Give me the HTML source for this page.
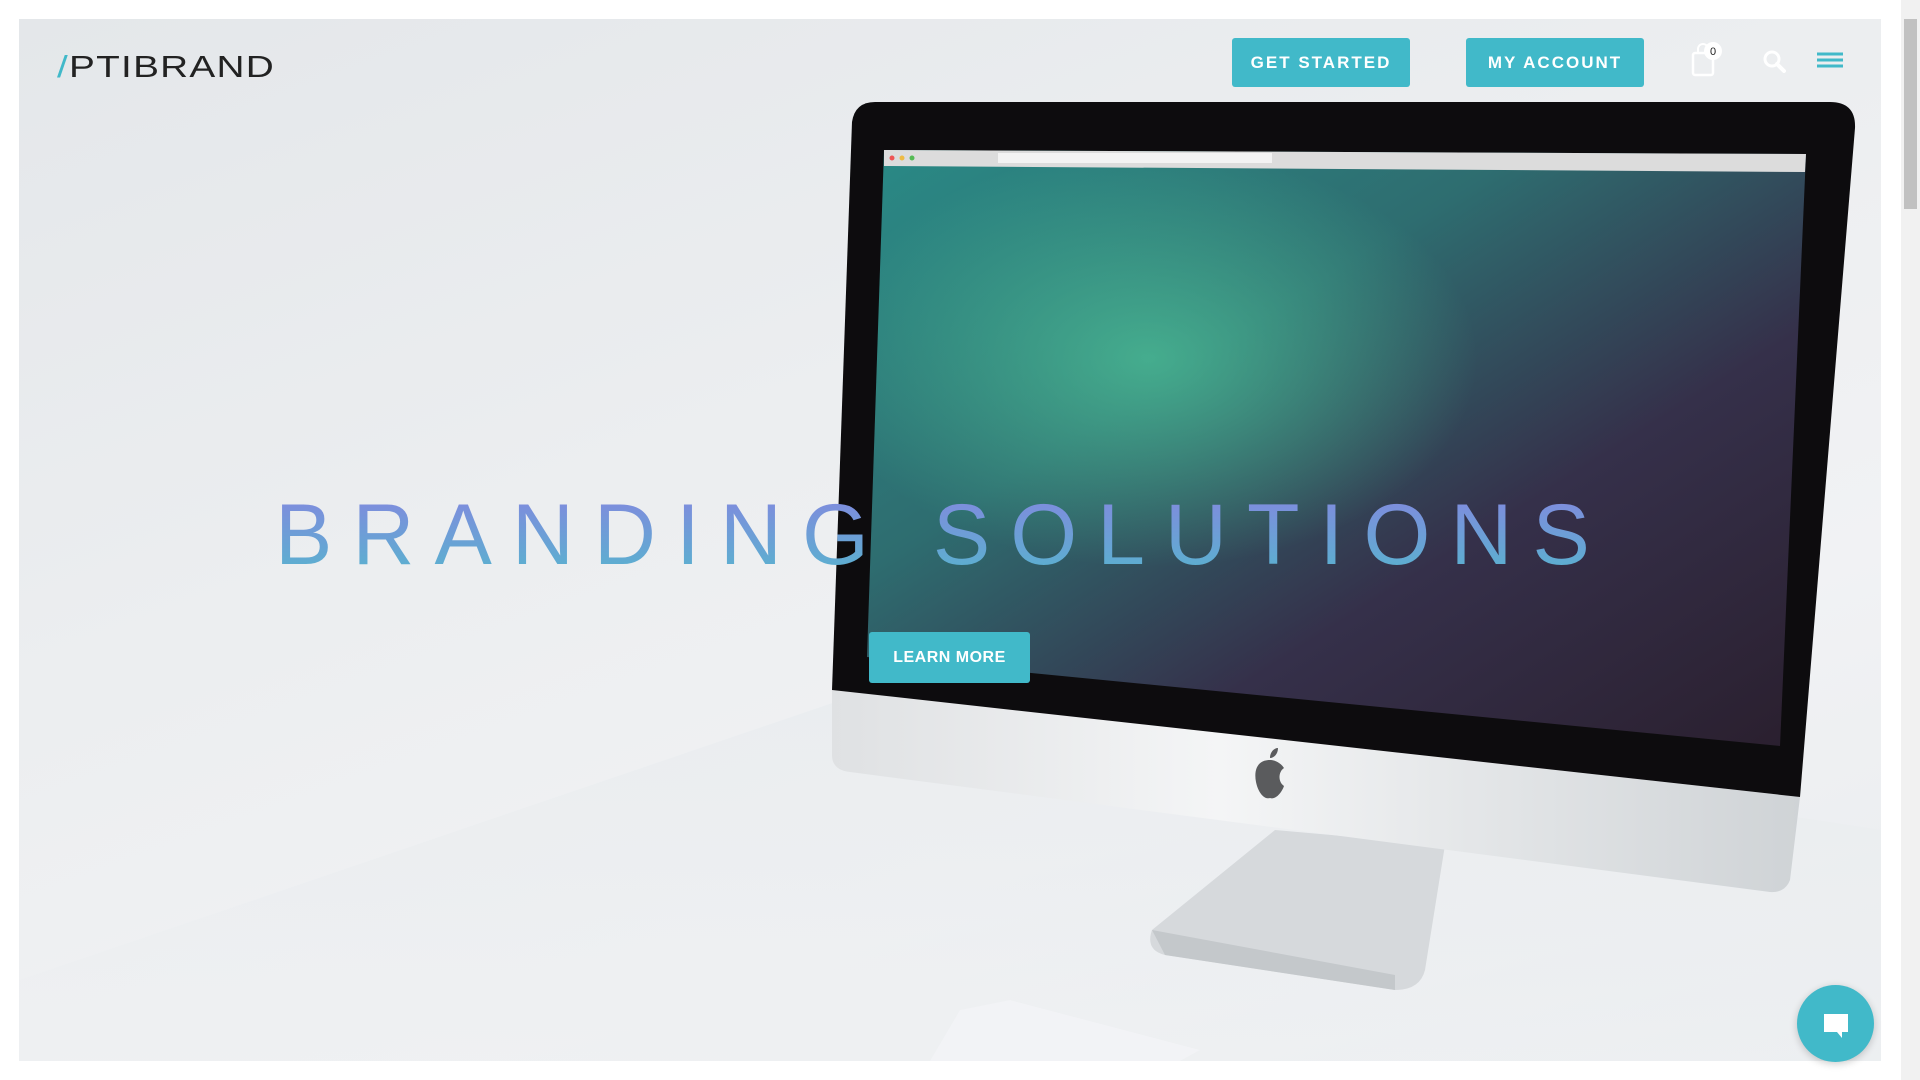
<!DOCTYPE html>
<html><head><meta charset="utf-8"><style>
html,body{margin:0;padding:0;width:1920px;height:1080px;overflow:hidden;background:#fff;font-family:"Liberation Sans",sans-serif}
#hero{position:absolute;left:19px;top:19px;width:1862px;height:1042px;overflow:hidden;
background:linear-gradient(160deg,#e4e7ea 0%,#eceef0 40%,#f1f2f4 70%,#e9ecef 100%)}
.btn{position:absolute;background:#41b9c9;color:#fff;font-weight:bold;letter-spacing:2px;font-size:17px;text-align:center;border-radius:3px}
#sb{position:absolute;right:0;top:0;width:19px;height:1080px;background:#f1f1f1}
#sb div{position:absolute;left:3px;top:19px;width:13px;height:190px;background:#c1c1c1}
h1{position:absolute;left:256px;top:456px;margin:0;font-size:86px;font-weight:normal;letter-spacing:20px;white-space:nowrap;
background:linear-gradient(#8b80e2,#4fbccb);-webkit-background-clip:text;background-clip:text;color:transparent;line-height:120px}
</style></head><body>
<div id="hero">
<svg width="1862" height="1042" viewBox="19 19 1862 1042" style="position:absolute;left:0;top:0">
<defs>
<linearGradient id="scr" x1="0" y1="0" x2="1" y2="1"><stop offset="0" stop-color="#2a8a86"/><stop offset="0.35" stop-color="#2e6d70"/><stop offset="0.65" stop-color="#35304a"/><stop offset="1" stop-color="#2a1f2e"/></linearGradient>
<radialGradient id="neb" cx="0.3" cy="0.35" r="0.35"><stop offset="0" stop-color="#4fc79a" stop-opacity="0.7"/><stop offset="1" stop-color="#4fc79a" stop-opacity="0"/></radialGradient>
<linearGradient id="chin" x1="0" y1="0" x2="1" y2="0"><stop offset="0" stop-color="#dfe1e3"/><stop offset="0.4" stop-color="#f4f5f6"/><stop offset="1" stop-color="#cfd3d6"/></linearGradient>
<linearGradient id="tbl" x1="0" y1="0" x2="0" y2="1"><stop offset="0" stop-color="#e8ebee"/><stop offset="1" stop-color="#eef0f2"/></linearGradient>
</defs>
<polygon points="19,980 900,680 1881,830 1881,1061 19,1061" fill="url(#tbl)" opacity="0.7"/>
<path d="M1275,830 L1445,845 L1425,970 Q1420,990 1395,990 L1165,955 Q1145,950 1152,930 Z" fill="#d6d9dc"/>
<path d="M1152,930 L1395,975 L1395,990 L1165,955 Z" fill="#c4c8cb"/>
<path d="M832,690 L1800,797 L1790,880 Q1785,893 1770,892 L850,772 Q832,770 832,755 Z" fill="url(#chin)"/>
<path d="M875,102 L1830,102 Q1856,102 1855,128 L1800,797 L832,690 L852,122 Q855,102 875,102 Z" fill="#0d0c0e"/>
<polygon points="884,150 1806,154 1780,746 867,657" fill="url(#scr)"/>
<polygon points="884,150 1806,154 1780,746 867,657" fill="url(#neb)"/>
<polygon points="884,150 1806,154 1805,172 884,166" fill="#dcdcdc"/>
<rect x="998" y="153" width="274" height="10" fill="#f3f3f3"/>
<circle cx="892" cy="158" r="2.5" fill="#e55"/><circle cx="902" cy="158" r="2.5" fill="#eb4"/><circle cx="912" cy="158" r="2.5" fill="#5b5"/>
<path d="M1270,760 c-14,0 -16,12 -14,22 c2,10 8,18 14,16 c6,2 12,-6 14,-12 c-6,-4 -6,-14 0,-18 c-4,-6 -10,-8 -14,-8 z M1270,758 c0,-6 4,-10 8,-10 c0,6 -4,10 -8,10z" fill="#5a5b5d"/>
<polygon points="960,1010 1010,1000 1200,1050 1180,1061 930,1061" fill="#f3f4f6" opacity="0.8"/>
</svg>
<h1>BRANDING SOLUTIONS</h1>
<div class="btn" style="left:850px;top:613px;width:161px;height:51px;line-height:51px;font-size:16px;letter-spacing:0.5px">LEARN MORE</div>
<div style="position:absolute;left:38px;top:30px;font-size:31px;letter-spacing:1px;color:#222;transform:scaleX(1.25);transform-origin:left;font-weight:normal"><span style="color:#41b9c9">/</span>PTIBRAND</div>
<div class="btn" style="left:1213px;top:19px;width:178px;height:49px;line-height:49px">GET STARTED</div>
<div class="btn" style="left:1447px;top:19px;width:178px;height:49px;line-height:49px">MY ACCOUNT</div>
<svg style="position:absolute;left:1671px;top:22px" width="40" height="40">
<rect x="3" y="12" width="20" height="22" rx="2" fill="none" stroke="#fff" stroke-width="2.5"/>
<path d="M8,12 v-4 a5,5 0 0 1 10,0 v4" fill="none" stroke="#fff" stroke-width="2"/>
<circle cx="23" cy="10" r="9" fill="#fff"/><text x="23" y="14" font-size="11" text-anchor="middle" font-family="Liberation Sans" fill="#222">0</text></svg>
<svg style="position:absolute;left:1743px;top:30px" width="26" height="26"><circle cx="10" cy="10" r="7" fill="none" stroke="#fff" stroke-width="3"/><path d="M15,15 L22,22" stroke="#fff" stroke-width="4" stroke-linecap="round"/></svg>
<svg style="position:absolute;left:1798px;top:33px" width="26" height="18"><path d="M0,2H26M0,8H26M0,14H26" stroke="#41b9c9" stroke-width="3"/></svg>
</div>
<div style="position:absolute;left:1797px;top:985px;width:77px;height:77px;border-radius:50%;background:#41b9c9;box-shadow:0 2px 8px rgba(0,0,0,.2)">
<svg width="77" height="77"><path d="M27,29 h24 v18 h-6 l0,6 l-5,-6 h-13 z" fill="#fff"/></svg></div>
<div id="sb"><div></div></div>
</body></html>
